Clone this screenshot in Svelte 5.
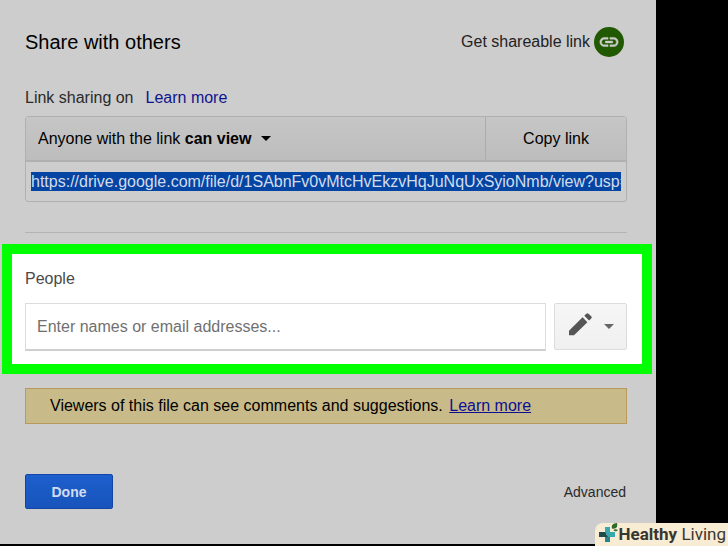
<script lang="ts">
  // Share dialog: link sharing, people field, notice and footer actions

  let shareUrl = $state(
    'https://drive.google.com/file/d/1SAbnFv0vMtcHvEkzvHqJuNqUxSyioNmb/view?usp=sharing'
  );
  let people = $state('');
</script>

<div class="stage">
  <main class="dialog">
    <header class="title-row">
      <h1>Share with others</h1>
      <button class="shareable" type="button">
        Get shareable link
        <span class="link-badge">
          <svg viewBox="0 0 24 24" width="22" height="22" aria-hidden="true">
            <path
              d="M3.9 12c0-1.7 1.4-3.1 3.1-3.1h4V7H7a5 5 0 0 0 0 10h4v-1.9H7A3.1 3.1 0 0 1 3.9 12zM8 13h8v-2H8v2zm9-6h-4v1.9h4a3.1 3.1 0 0 1 0 6.2h-4V17h4a5 5 0 0 0 0-10z"
            />
          </svg>
        </span>
      </button>
    </header>

    <section class="link-section">
      <div class="link-status">
        <label for="share-url">Link sharing on</label>
        <a href="#link-help">Learn more</a>
      </div>

      <div class="link-box">
        <div class="link-bar">
          <button class="access" type="button">
            <span>Anyone with the link <b>can view</b></span>
            <span class="arrow"></span>
          </button>
          <button class="copy" type="button">Copy link</button>
        </div>
        <div class="url-row">
          <input id="share-url" type="text" readonly bind:value={shareUrl} />
        </div>
      </div>

      <hr />
    </section>

    <section class="people">
      <label for="people">People</label>
      <div class="people-row">
        <input id="people" type="text" placeholder="Enter names or email addresses..." bind:value={people} />
        <button class="role" type="button" aria-label="Can edit">
          <svg viewBox="0 0 24 24" width="24" height="24" aria-hidden="true">
            <path d="M1 18.7 14.6 5.3l4.8 4.9L6 23.2H1z" />
            <path d="M16.3 3.7l2-2a1.6 1.6 0 0 1 2.2 0L23.200 4.300a1.600 1.600 0 0 1 0 2.200l-2.100 2.100z" />
          </svg>
          <span class="arrow"></span>
        </button>
      </div>
    </section>

    <p class="notice">
      Viewers of this file can see comments and suggestions.
      <a href="#viewer-help">Learn more</a>
    </p>

    <footer class="actions">
      <button class="done" type="button">Done</button>
      <button class="advanced" type="button">Advanced</button>
    </footer>
  </main>

  <div class="brand">
    <svg viewBox="0 0 20 22" width="20" height="22" aria-hidden="true">
      <path d="M6 4h5v7H6z" fill="#35a9ae" />
      <path d="M8 9h8v5H8z" fill="#35a9ae" />
      <path d="M0 9h6l3 5H0z" fill="#1c4c50" />
      <path d="M6 14h5v5H6z" fill="#26838a" />
      <path d="M13 5.500c-1-3.500 1-5 5-5.500 1 4-1 6.500-5 5.500z" fill="#2e6b2c" />
      <path d="M14.500 7.300c1-1.300 3-1.300 4.500 0-1.500 1.400-3.500 1.400-4.500 0z" fill="#2e6b2c" />
    </svg>
    <span><b>Healthy</b> Living</span>
  </div>
</div>

<style>
  :global(body) {
    background: #000;
  }

  .stage {
    position: relative;
    box-sizing: border-box;
    min-height: 100vh;
    padding: 0 72px 2px 0;
    background: #000;
    font-family: 'Liberation Sans', Arial, sans-serif;
    font-size: 16px;
    line-height: 20px;
    color: #000;
  }

  .dialog {
    padding-bottom: 35px;
    background: #cdcdcd;
  }

  button,
  input {
    box-sizing: border-box;
    margin: 0;
    padding: 0;
    border: 0;
    border-radius: 0;
    background: none;
    font: inherit;
    color: inherit;
  }

  button {
    cursor: pointer;
  }

  .title-row {
    display: flex;
    align-items: center;
    justify-content: space-between;
    padding: 27px 32px 0 25px;
  }

  h1 {
    margin: 0;
    font-size: 20px;
    font-weight: normal;
  }

  .shareable {
    display: flex;
    align-items: center;
    gap: 4px;
    color: #222;
  }

  .link-badge {
    display: flex;
    align-items: center;
    justify-content: center;
    width: 30px;
    height: 30px;
    border-radius: 50%;
    background: #215900;
  }

  .link-badge svg {
    fill: #cdcdcd;
    stroke: #cdcdcd;
    stroke-width: 0.5;
  }

  .link-section {
    padding: 31px 29px 0 25px;
  }

  .link-status {
    display: flex;
    gap: 12px;
    margin-bottom: 8px;
    color: #2a2a2a;
  }

  .link-status a {
    color: #0f148e;
    text-decoration: none;
  }

  .link-box {
    border: 1px solid #b0b0b0;
    border-radius: 3px;
  }

  .link-bar {
    display: flex;
    height: 45px;
    box-sizing: border-box;
    border-bottom: 2px solid #b0b0b0;
    background: linear-gradient(#c6c6c6, #bdbdbd);
  }

  .access {
    display: flex;
    flex: 1;
    align-items: center;
    gap: 10px;
    padding-left: 12px;
  }

  .arrow {
    border: 5px solid transparent;
    border-top-color: currentColor;
    border-bottom: 0;
  }

  .copy {
    width: 141px;
    border-left: 1px solid #acacac;
  }

  .url-row {
    display: flex;
    padding: 10px 5px;
  }

  .url-row input {
    flex: 1;
    min-width: 0;
    height: 19px;
    background: #0445a4;
    color: #d4dcea;
  }

  hr {
    margin: 30px 0 11px;
    border: 0;
    border-top: 1px solid #b4b4b4;
  }

  .people {
    margin: 0 4px 0 2px;
    padding: 15px 15px 13px 13px;
    border: 10px solid #0f0;
    background: #fff;
    color: #4a4a4a;
  }

  .people label {
    display: block;
    margin-bottom: 14px;
  }

  .people-row {
    display: flex;
    gap: 8px;
  }

  .people-row input {
    flex: 1;
    min-width: 0;
    height: 48px;
    padding: 0 11px;
    border: 1px solid #dcdcdc;
    border-bottom: 2px solid #cfcfcf;
  }

  .people-row input::placeholder {
    color: #707070;
    opacity: 1;
  }

  .role {
    display: flex;
    align-items: center;
    justify-content: center;
    gap: 12px;
    width: 73px;
    height: 47px;
    border: 1px solid #dcdcdc;
    border-radius: 2px;
    background: linear-gradient(#f6f6f6, #f0f0f0);
    color: #666;
  }

  .role svg {
    margin-bottom: 5px;
    fill: #555;
  }

  .notice {
    margin: 14px 29px 50px 25px;
    padding: 7px 24px;
    border: 1px solid #b99a5c;
    background: #c8bb89;
  }

  .notice a {
    margin-left: 2px;
    color: #0d0f92;
  }

  .actions {
    display: flex;
    align-items: center;
    justify-content: space-between;
    padding: 0 30px 0 25px;
    font-size: 14px;
  }

  .done {
    width: 88px;
    height: 35px;
    border: 1px solid #1245a6;
    border-radius: 2px;
    background: linear-gradient(#1c5fcd, #1854bb);
    color: #d2dcf0;
    font-weight: bold;
  }

  .advanced {
    color: #2a2a2a;
  }

  /* Brand tag sits over the corner of the dialog */
  .brand {
    position: absolute;
    right: 0;
    bottom: 0;
    display: flex;
    align-items: center;
    box-sizing: border-box;
    height: 23px;
    padding: 0 2px 1px 4px;
    border-radius: 8px 0 0 0;
    background: #f8ecd4;
    color: #38372f;
    font-family: Roboto, sans-serif;
    font-size: 17px;
    white-space: nowrap;
  }
</style>
